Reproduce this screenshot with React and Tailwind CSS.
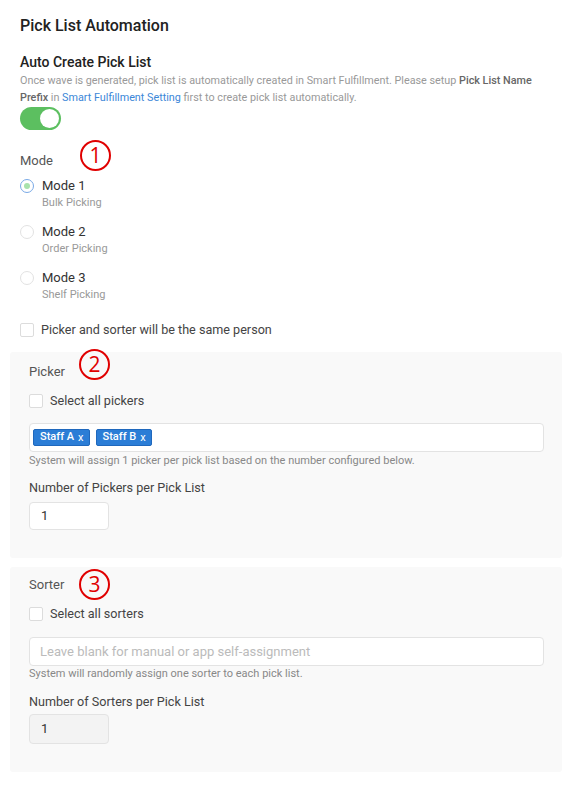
import React, { useState } from 'react'

const MODES = [
  { id: 1, name: 'Mode 1', desc: 'Bulk Picking' },
  { id: 2, name: 'Mode 2', desc: 'Order Picking' },
  { id: 3, name: 'Mode 3', desc: 'Shelf Picking' },
]

// red numbered marker drawn over the screenshot
function Marker({ n, className }) {
  return (
    <div className={`absolute w-[31px] h-[31px] rounded-full border-2 border-[#e00000] flex items-center justify-center text-[#e00000] text-[21px] leading-none font-['Open_Sans',sans-serif] ${className}`}>
      {n}
    </div>
  )
}

function Checkbox({ label }) {
  return (
    <label className="flex items-center gap-[7px] text-[12.6px] leading-[18px] text-[#444]">
      <span className="w-[14px] h-[14px] rounded-[2px] border border-[#dcdcdc] bg-white shrink-0" />
      {label}
    </label>
  )
}

function Tag({ children }) {
  return (
    <span className="inline-flex items-center h-[17px] pl-[6px] pr-[5px] gap-[4px] rounded-[2px] bg-[#2b7dd6] border border-[#1f68bd] text-white text-[11px] font-medium">
      {children}
      <span className="text-[11px] font-normal leading-none">x</span>
    </span>
  )
}

export default function App() {
  const [mode, setMode] = useState(1)
  const [auto, setAuto] = useState(true)

  return (
    <div className="w-[570px] min-h-[789px] bg-white font-['Roboto',sans-serif] text-[#333] pl-[10px] pr-[8px] pt-[16px] pb-[18px]">
      <div className="px-[10px]">
        <h1 className="text-[16px] leading-[20px] font-medium text-[#222]">Pick List Automation</h1>

        <h2 className="mt-[17px] text-[14px] leading-[18px] font-medium text-[#222]">Auto Create Pick List</h2>
        <p className="mt-px text-[10.8px] leading-[17px] text-[#999]">
          Once wave is generated, pick list is automatically created in Smart Fulfillment. Please setup{' '}
          <span className="font-medium text-[#666]">Pick List Name Prefix</span> in{' '}
          <a className="text-[#3c87d8]">Smart Fulfillment Setting</a> first to create pick list automatically.
        </p>

        <button
          onClick={() => setAuto(!auto)}
          className={`mt-px w-[41px] h-[23px] rounded-full p-[2px] flex ${auto ? 'bg-[#5cbf60] justify-end' : 'bg-[#ddd] justify-start'}`}
        >
          <span className="w-[19px] h-[19px] rounded-full bg-white" />
        </button>

        <div className="relative mt-[22px]">
          <div className="text-[13px] leading-[18px] text-[#555]">Mode</div>
          <Marker n="1" className="left-[60px] top-[-12px]" />
        </div>

        <div className="mt-[7px] flex flex-col gap-[12px]">
          {MODES.map((m) => (
            <div key={m.id} className="flex items-start gap-[8px] cursor-pointer" onClick={() => setMode(m.id)}>
              <span
                className={`mt-[2px] w-[14px] h-[14px] rounded-full border flex items-center justify-center shrink-0 ${
                  mode === m.id ? 'border-[#79a9e6]' : 'border-[#e2e2e2]'
                }`}
              >
                {mode === m.id && <span className="w-[6px] h-[6px] rounded-full bg-[#a8e2ac]" />}
              </span>
              <div>
                <div className="text-[13px] leading-[18px] text-[#333]">{m.name}</div>
                <div className="text-[11px] leading-[16px] text-[#999]">{m.desc}</div>
              </div>
            </div>
          ))}
        </div>

        <div className="mt-[18px]">
          <Checkbox label="Picker and sorter will be the same person" />
        </div>
      </div>

      <section className="mt-[13px] bg-[#f9f9f9] rounded-[3px] pl-[19px] pr-[18px] pt-[11px] pb-[28px]">
        <div className="relative">
          <div className="text-[13px] leading-[18px] text-[#555]">Picker</div>
          <Marker n="2" className="left-[50px] top-[-14px]" />
        </div>
        <div className="mt-[11px]">
          <Checkbox label="Select all pickers" />
        </div>
        <div className="mt-[13px] h-[29px] bg-white border border-[#e3e3e3] rounded-[4px] flex items-center gap-[6px] pl-[3px]">
          <Tag>Staff A</Tag>
          <Tag>Staff B</Tag>
        </div>
        <p className="mt-[2px] text-[11px] leading-[14px] text-[#888]">
          System will assign 1 picker per pick list based on the number configured below.
        </p>
        <div className="mt-[11px] text-[12.6px] leading-[18px] text-[#444]">Number of Pickers per Pick List</div>
        <div className="mt-[5px] w-[80px] h-[28px] bg-white border border-[#e3e3e3] rounded-[4px] flex items-center px-[11px] text-[13px] text-[#333]">
          1
        </div>
      </section>

      <section className="mt-[9px] bg-[#f9f9f9] rounded-[3px] pl-[19px] pr-[18px] pt-[9px] pb-[28px]">
        <div className="relative">
          <div className="text-[13px] leading-[18px] text-[#555]">Sorter</div>
          <Marker n="3" className="left-[50px] top-[-7px]" />
        </div>
        <div className="mt-[11px]">
          <Checkbox label="Select all sorters" />
        </div>
        <div className="mt-[14px] h-[29px] bg-white border border-[#e3e3e3] rounded-[4px] flex items-center px-[10px] text-[13px] text-[#bbb]">
          Leave blank for manual or app self-assignment
        </div>
        <p className="mt-px text-[11px] leading-[14px] text-[#888]">
          System will randomly assign one sorter to each pick list.
        </p>
        <div className="mt-[12px] text-[12.6px] leading-[18px] text-[#444]">Number of Sorters per Pick List</div>
        <div className="mt-[3px] w-[80px] h-[30px] bg-[#f3f3f3] border border-[#e3e3e3] rounded-[4px] flex items-center px-[11px] text-[13px] text-[#333]">
          1
        </div>
      </section>
    </div>
  )
}
